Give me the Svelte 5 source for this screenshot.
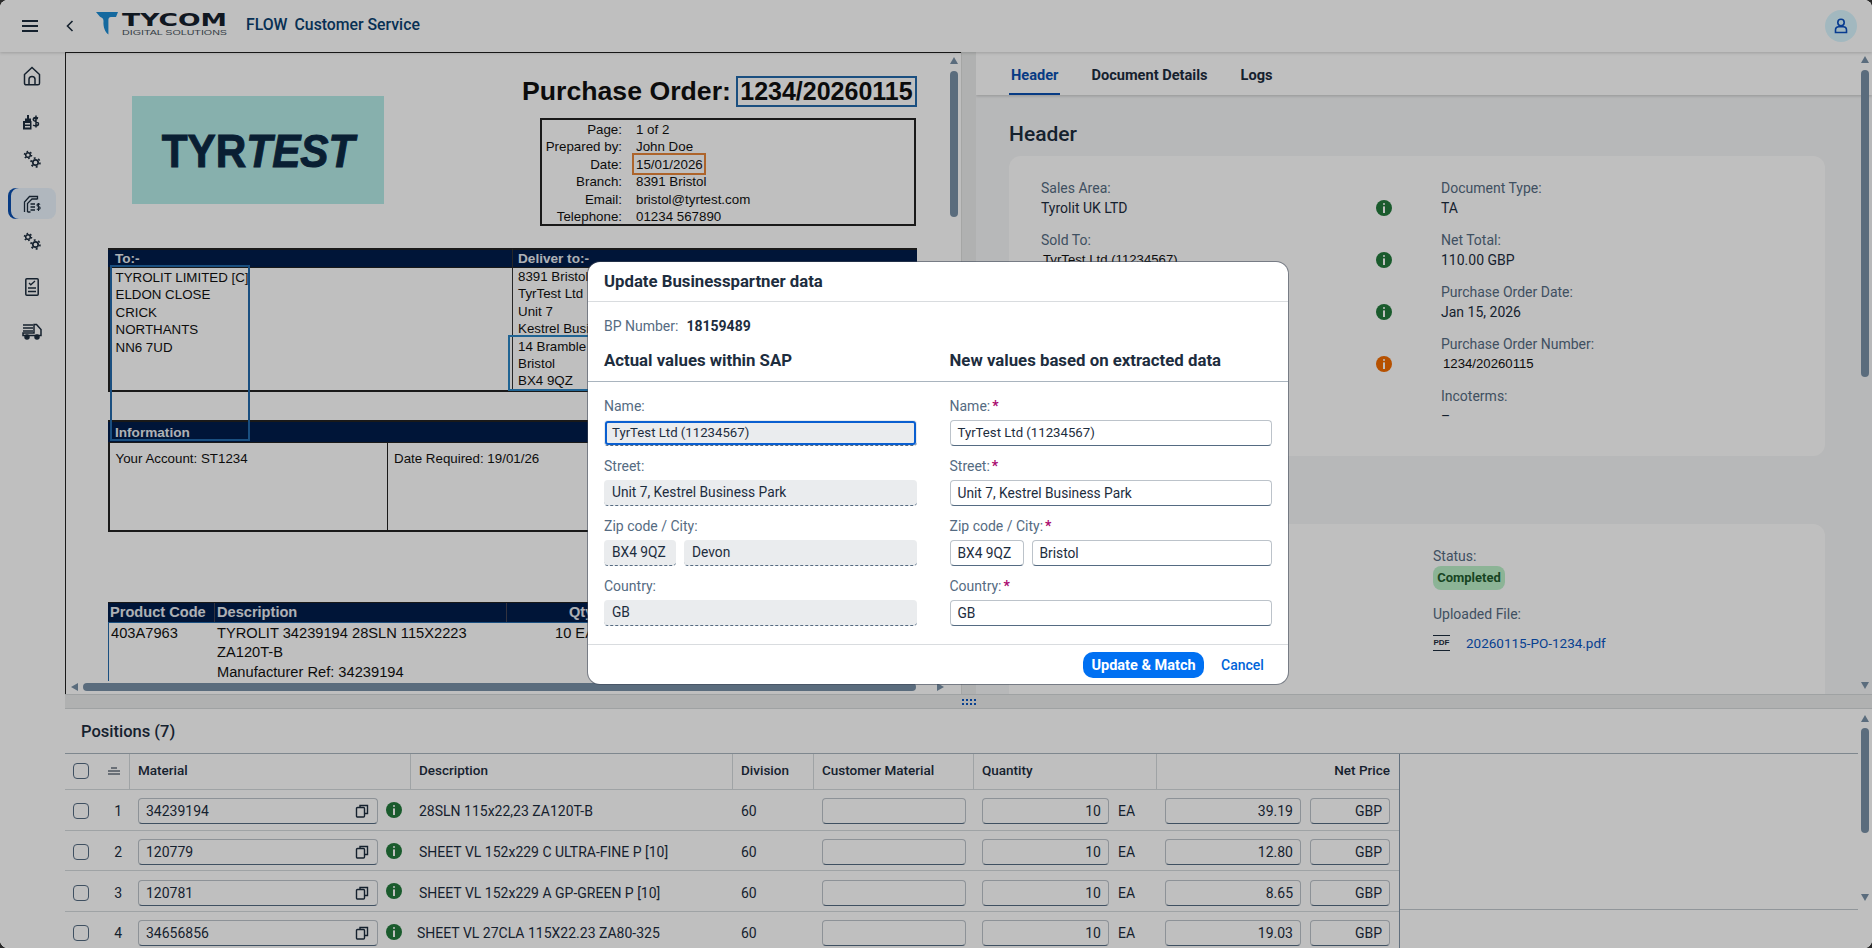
<script>
    const rows = [
        { no: 1, material: '34239194', desc: '28SLN 115x22,23 ZA120T-B', price: '39.19' },
        { no: 2, material: '120779', desc: 'SHEET VL 152x229 C ULTRA-FINE P [10]', price: '12.80' },
        { no: 3, material: '120781', desc: 'SHEET VL 152x229 A GP-GREEN P [10]', price: '8.65' },
        { no: 4, material: '34656856', desc: 'SHEET VL 27CLA 115X22.23 ZA80-325', price: '19.03' }
    ];

    const infoLines = [
        ['Page:', '1 of 2'],
        ['Prepared by:', 'John Doe'],
        ['Date:', '15/01/2026'],
        ['Branch:', '8391 Bristol'],
        ['Email:', 'bristol@tyrtest.com'],
        ['Telephone:', '01234 567890']
    ];

    const headerFields = [
        { left: 'Sales Area:', leftValue: 'Tyrolit UK LTD', right: 'Document Type:', rightValue: 'TA', tone: 'green' },
        { left: 'Sold To:', leftValue: 'TyrTest Ltd (11234567)', right: 'Net Total:', rightValue: '110.00 GBP', tone: 'green' },
        { left: '', leftValue: '', right: 'Purchase Order Date:', rightValue: 'Jan 15, 2026', tone: 'green' },
        { left: '', leftValue: '', right: 'Purchase Order Number:', rightValue: '1234/20260115', tone: 'orange' },
        { left: '', leftValue: '', right: 'Incoterms:', rightValue: '–', tone: '' }
    ];
</script>

{#snippet info(tone)}
    <svg class="info {tone}" viewBox="0 0 16 16" width="16" height="16">
        <circle cx="8" cy="8" r="8" fill="currentColor" />
        <rect x="7" y="3" width="2" height="2" rx="1" fill="#fff" />
        <rect x="7" y="6.4" width="2" height="6.6" fill="#fff" />
    </svg>
{/snippet}

{#snippet gears()}
    <svg viewBox="0 0 20 20" width="20" height="20" fill="none" stroke="#1d2d3e">
        <circle cx="6" cy="6" r="2.3" stroke-width="1.5" />
        <circle cx="6" cy="6" r="3.6" stroke-width="1.4" stroke-dasharray="1.6 2.17" />
        <circle cx="13.5" cy="13.5" r="2.7" stroke-width="1.7" />
        <circle cx="13.5" cy="13.5" r="4.5" stroke-width="1.6" stroke-dasharray="2 2.71" />
    </svg>
{/snippet}

<div class="root">
    <header class="shell">
        <svg class="burger" viewBox="0 0 16 12" width="16" height="12" fill="#1d2d3e">
            <rect width="16" height="2" /><rect y="5" width="16" height="2" /><rect y="10" width="16" height="2" />
        </svg>
        <svg class="back" viewBox="0 0 8 12" width="8" height="12" fill="none" stroke="#1d2d3e" stroke-width="1.6">
            <path d="M6.5 1 1.5 6l5 5" />
        </svg>
        <svg class="logo" viewBox="0 0 132 26" width="132" height="26">
            <path d="M0 1h22l-2 5h-5c-2 0-2.6 1.5-2.6 3v14.5C9 21 7 16 7.5 10 7.700 8 6 6.500 4 5.800Z" fill="#1c8cd4" />
            <text x="26" y="15.300" font-family="'DejaVu Sans', sans-serif" font-weight="700" font-size="18" textLength="105" lengthAdjust="spacingAndGlyphs" fill="#16202c">TYCOM</text>
            <text x="26" y="23.500" font-family="'Liberation Sans', sans-serif" font-size="7.500" textLength="105" lengthAdjust="spacingAndGlyphs" fill="#4a5560">DIGITAL SOLUTIONS</text>
        </svg>
        <div class="app-title"><span>FLOW</span><span>Customer Service</span></div>
        <div class="avatar">
            <svg viewBox="0 0 16 16" width="16" height="16" fill="none" stroke="#0a4fc0" stroke-width="1.6">
                <circle cx="8" cy="4.500" r="3.200" />
                <path d="M2.500 14.500V12c0-2 1.500-3.300 3.300-3.300h4.400c1.800 0 3.300 1.300 3.300 3.300v2.500Z" />
            </svg>
        </div>
    </header>

    <div class="main">
        <nav class="side">
            <div class="nav-item home">
                <svg viewBox="0 0 18 20" width="18" height="20" fill="none" stroke="#1d2d3e" stroke-width="1.500">
                    <path d="M1.500 8.500 9 1.500l7.500 7v8.700c0 1-.8 1.600-1.600 1.600H3.100c-.8 0-1.600-.6-1.600-1.600Z" />
                    <path d="M6 18.500v-5.200c0-1.700 1.300-2.800 3-2.800s3 1.100 3 2.800v5.200" />
                </svg>
            </div>
            <div class="nav-item funds">
                <svg viewBox="0 0 20 18" width="20" height="18" fill="#1d2d3e">
                    <path d="M1 16.500V8h2V5.500h2V2h2v3.500h2V8h.5v8.500ZM3 10v1.500h5V10Zm0 3v1.500h5V13Z" fill-rule="evenodd" />
                    <path d="M11 5.500h5M16 5c-1-.9-4.800-1-4.800 1.400 0 2.600 5.300 1.600 5.300 4.300 0 2.500-4 2.400-5.400 1.300M14 2.500v12" fill="none" stroke="#1d2d3e" stroke-width="1.500" />
                </svg>
            </div>
            <div class="nav-item gears-a">{@render gears()}</div>
            <div class="nav-item active">
                <svg viewBox="0 0 18 18" width="18" height="18" fill="none" stroke="#1d2d3e" stroke-width="1.300">
                    <path d="M1.500 17V7L6.500 1.500h8V4.500" />
                    <path d="M4.500 17V8.500L9 4h5" />
                    <path d="M7.500 9h4.500M7.500 12h4.500M7.500 15h4.500M4.500 17h3" stroke-width="1.400" />
                    <path d="M17 9.500c-.6-.9-3-.9-3 .7 0 1.800 3.200 1 3.200 2.900 0 1.700-2.600 1.600-3.400.8M15.500 8v8" stroke-width="1.100" />
                </svg>
            </div>
            <div class="nav-item gears-b">{@render gears()}</div>
            <div class="nav-item check">
                <svg viewBox="0 0 14 18" width="14" height="18" fill="none" stroke="#1d2d3e" stroke-width="1.500">
                    <rect x=".8" y=".8" width="12.400" height="16.400" rx="1" />
                    <path d="m4 5 1.800 1.800L10 3" stroke-width="1.300" />
                    <path d="M3 10h8M3 13.500h8" />
                </svg>
            </div>
            <div class="nav-item truck">
                <svg viewBox="0 0 20 18" width="20" height="18" fill="none" stroke="#1d2d3e" stroke-width="1.500">
                    <path d="M1 2h10M1 5h10M1 8h10" />
                    <path d="M12 1.500h2.500l4.500 5v6H1v-2.500h11Z" />
                    <circle cx="5" cy="14" r="2" fill="#1d2d3e" />
                    <circle cx="15" cy="14" r="2" fill="#1d2d3e" />
                </svg>
            </div>
        </nav>

        <div class="content">
            <div class="upper">
                <section class="doc-pane">
                    <div class="doc-view">
                        <div class="page">
                            <div class="top">
                                <div class="brand"><div class="brand-text"><span>TYR</span><em>TEST</em></div></div>
                                <div class="top-right">
                                    <div class="title"><span>Purchase Order:</span><span class="po-no">1234/20260115</span></div>
                                    <div class="info-box">
                                        {#each infoLines as line}
                                            <div class="info-line">
                                                <span class="k">{line[0]}</span>
                                                <span class="v" class:hl={line[0] === 'Date:'}>{line[1]}</span>
                                            </div>
                                        {/each}
                                    </div>
                                </div>
                            </div>

                            <div class="addr">
                                <div class="bar">To:-</div>
                                <div class="bar">Deliver to:-</div>
                                <div class="cell lines">TYROLIT LIMITED [C]<br />ELDON CLOSE<br />CRICK<br />NORTHANTS<br />NN6 7UD</div>
                                <div class="cell">8391 Bristol<br />TyrTest Ltd<br />Unit 7<br />Kestrel Business Park<br />14 Bramble Way<br />Bristol<br />BX4 9QZ</div>
                            </div>

                            <div class="inform">
                                <div class="bar wide">Information</div>
                                <div class="cell">Your Account: ST1234</div>
                                <div class="cell">Date Required: 19/01/26</div>
                            </div>

                            <div class="products">
                                <div class="p-head">
                                    <span class="pc">Product Code</span>
                                    <span class="pd">Description</span>
                                    <span class="pq">Qty</span>
                                </div>
                                <div class="p-row">
                                    <span class="pc">403A7963</span>
                                    <span class="pd">TYROLIT 34239194 28SLN 115X2223<br />ZA120T-B<br /><span class="ref">Manufacturer Ref: 34239194</span></span>
                                    <span class="pq">10 EA</span>
                                </div>
                            </div>

                            <div class="mark mark-to"></div>
                            <div class="mark mark-ship"></div>
                        </div>
                    </div>
                    <div class="hscroll">
                        <i class="arrow left"></i>
                        <div class="hthumb"></div>
                        <i class="arrow right"></i>
                    </div>
                    <div class="vscroll doc-v">
                        <i class="arrow up"></i>
                        <div class="vthumb"></div>
                    </div>
                </section>

                <div class="vsplit"></div>

                <section class="detail">
                    <div class="tabs">
                        <span class="tab on">Header</span>
                        <span class="tab">Document Details</span>
                        <span class="tab">Logs</span>
                    </div>
                    <div class="detail-body">
                        <h2>Header</h2>
                        <div class="card one">
                            {#each headerFields as f}
                                <div class="f-row">
                                    <div class="f-left">
                                        {#if f.left}<div class="lbl">{f.left}</div><div class="val" class:mono={f.left === 'Sold To:'}>{f.leftValue}</div>{/if}
                                    </div>
                                    <div class="f-icon">{#if f.tone}{@render info(f.tone)}{/if}</div>
                                    <div class="f-right">
                                        <div class="lbl">{f.right}</div>
                                        <div class="val" class:mono={f.tone === 'orange'}>{f.rightValue}</div>
                                    </div>
                                </div>
                            {/each}
                        </div>
                        <div class="card two">
                            <div class="lbl">Status:</div>
                            <div class="badge">Completed</div>
                            <div class="lbl up">Uploaded File:</div>
                            <div class="file">
                                <span class="pdf">PDF</span>
                                <span class="link">20260115-PO-1234.pdf</span>
                            </div>
                        </div>
                    </div>
                    <div class="vscroll detail-v">
                        <i class="arrow up"></i>
                        <div class="vthumb"></div>
                        <i class="arrow down"></i>
                    </div>
                </section>
            </div>

            <div class="hsplit"><div class="grip"></div></div>

            <section class="positions">
                <div class="pos-title">Positions (7)</div>
                <div class="table-wrap">
                    <div class="grid">
                        <div class="g-head">
                            <div class="c-sel"><span class="box"></span>
                                <svg viewBox="0 0 14 8" width="14" height="8" stroke="#1d2d3e" fill="none"><path d="M4 1h6M1 4h12M1 7h12" /></svg>
                            </div>
                            <div class="c-mat">Material</div>
                            <div class="c-desc">Description</div>
                            <div class="c-div">Division</div>
                            <div class="c-cust">Customer Material</div>
                            <div class="c-qty">Quantity</div>
                            <div class="c-price end">Net Price</div>
                        </div>
                        {#each rows as r}
                            <div class="g-row">
                                <div class="c-sel"><span class="box"></span><span class="no">{r.no}</span></div>
                                <div class="c-mat">
                                    <div class="inp mat">{r.material}
                                        <svg viewBox="0 0 14 14" width="14" height="14" fill="none" stroke="#1d2d3e" stroke-width="1.400">
                                            <path d="M5 3.500V1.500h7.500v8H9.500" />
                                            <rect x="1.500" y="3.500" width="8" height="9.500" rx="1" />
                                        </svg>
                                    </div>
                                    {@render info('green')}
                                </div>
                                <div class="c-desc" class:nudge={r.no === 4}>{r.desc}</div>
                                <div class="c-div">60</div>
                                <div class="c-cust"><div class="inp"></div></div>
                                <div class="c-qty"><div class="inp num">10</div><span>EA</span></div>
                                <div class="c-price"><div class="inp num p">{r.price}</div><div class="inp num cur">GBP</div></div>
                            </div>
                        {/each}
                    </div>
                    <div class="filler"></div>
                </div>
                <div class="vscroll pos-v">
                    <i class="arrow up"></i>
                    <div class="vthumb"></div>
                    <i class="arrow down"></i>
                </div>
            </section>
        </div>
    </div>

    <div class="overlay"></div>

    <div class="modal">
        <div class="m-head">Update Businesspartner data</div>
        <div class="m-intro">
            <div class="bp"><span>BP Number:</span><b>18159489</b></div>
            <div class="m-cols heads"><b>Actual values within SAP</b><b>New values based on extracted data</b></div>
        </div>
        <div class="m-cols form">
            <div>
                <div class="fld"><label>Name:</label><div class="ro focus tight">TyrTest Ltd (11234567)</div></div>
                <div class="fld"><label>Street:</label><div class="ro">Unit 7, Kestrel Business Park</div></div>
                <div class="fld"><label>Zip code / City:</label><div class="pair"><div class="ro zip">BX4 9QZ</div><div class="ro city">Devon</div></div></div>
                <div class="fld"><label>Country:</label><div class="ro">GB</div></div>
            </div>
            <div>
                <div class="fld"><label>Name:<i>*</i></label><div class="ed tight">TyrTest Ltd (11234567)</div></div>
                <div class="fld"><label>Street:<i>*</i></label><div class="ed">Unit 7, Kestrel Business Park</div></div>
                <div class="fld"><label>Zip code / City:<i>*</i></label><div class="pair"><div class="ed zip">BX4 9QZ</div><div class="ed city">Bristol</div></div></div>
                <div class="fld"><label>Country:<i>*</i></label><div class="ed">GB</div></div>
            </div>
        </div>
        <div class="m-foot">
            <button class="primary">Update &amp; Match</button>
            <button class="plain">Cancel</button>
        </div>
    </div>
</div>

<style>
    :global(body) {
        margin: 0;
        background: #2b2b2b;
        overflow: hidden;
    }
    .root {
        position: relative;
        width: 1872px;
        height: 948px;
        overflow: hidden;
        border-radius: 8px;
        background: #fff;
        color: #1d2d3e;
        font-family: Roboto, "Liberation Sans", sans-serif;
        font-size: 14px;
    }

    /* shell bar */
    .shell {
        position: relative;
        z-index: 1;
        height: 52px;
        display: flex;
        align-items: center;
        background: #fff;
        box-shadow: 0 1px 3px rgba(0, 0, 0, .18);
    }
    .burger { margin-left: 22px; }
    .back { margin-left: 28px; }
    .logo { margin: -4px 0 0 22px; }
    .app-title {
        display: flex;
        gap: 7px;
        margin: -4px 0 0 18px;
        color: #0a4170;
        font-size: 15.800px;
        font-weight: 500;
    }
    .avatar {
        width: 32px;
        height: 32px;
        margin: 0 15px 0 auto;
        border-radius: 50%;
        background: #d9f6ff;
        display: flex;
        align-items: center;
        justify-content: center;
    }

    .main {
        display: flex;
        height: 896px;
    }
    .side {
        width: 65px;
        flex: none;
        background: #fff;
        position: relative;
    }
    .nav-item {
        position: absolute;
        left: 8px;
        width: 48px;
        height: 31px;
        display: flex;
        align-items: center;
        justify-content: center;
    }
    .home { top: 8px; }
    .funds { top: 54px; }
    .gears-a { top: 91px; }
    .active {
        top: 136px;
        background: #ebf5fe;
        border-radius: 8px;
        box-shadow: inset 3px 0 0 #0a4fb0;
    }
    .gears-b { top: 173px; }
    .check { top: 219px; }
    .truck { top: 264px; }

    .content {
        flex: 1;
        min-width: 0;
    }
    .upper {
        display: flex;
        height: 642px;
    }

    /* pdf preview */
    .doc-pane {
        position: relative;
        width: 896px;
        flex: none;
        box-sizing: border-box;
        border-top: 1px solid #222;
        border-left: 1px solid #222;
        background: #fff;
    }
    .doc-view {
        height: 628px;
        overflow: hidden;
    }
    .page {
        position: relative;
        width: 809px;
        margin-left: 42px;
        color: #111;
        font-family: "Liberation Sans", Arial, sans-serif;
        font-size: 13.33px;
        line-height: 17.400px;
    }
    .top {
        display: flex;
        justify-content: space-between;
        height: 195px;
    }
    .brand {
        width: 252px;
        height: 108px;
        margin: 43px 0 0 24px;
        background: #b5ebe7;
        color: #0c2a45;
        display: flex;
        align-items: center;
        justify-content: center;
        font-size: 47px;
        font-weight: 700;
    }
    .brand-text {
        transform: scaleX(.9);
        padding-top: 2px;
        white-space: nowrap;
        -webkit-text-stroke: 1px #0c2a45;
    }
    .top-right {
        width: 380px;
        padding-top: 23px;
    }
    .title {
        font-size: 26.670px;
        font-weight: 700;
        line-height: 31px;
        white-space: nowrap;
        margin-left: -15px;
        display: flex;
        align-items: center;
        gap: 5px;
    }
    .po-no {
        box-sizing: border-box;
        width: 182px;
        height: 31px;
        border: 2px solid #236aab;
        text-align: center;
        line-height: 27px;
        font-size: 25px;
    }
    .info-box {
        box-sizing: border-box;
        width: 376px;
        height: 108px;
        margin: 11px 0 0 3px;
        border: 2px solid #222;
        padding-top: .5px;
    }
    .info-line {
        display: flex;
        gap: 14px;
        height: 17.500px;
    }
    .k { width: 80px; text-align: right; }
    .v { position: relative; }
    .hl::after {
        content: "";
        position: absolute;
        left: -4px;
        top: -2.500px;
        width: 74px;
        height: 22px;
        box-sizing: border-box;
        border: 2px solid #e7863a;
    }
    .bar {
        background: #011c4b;
        color: #e8ecf2;
        font-weight: 700;
        font-size: 13.600px;
        padding-left: 7px;
        height: 20px;
        line-height: 18px;
        box-sizing: border-box;
        border-top: 2px solid #222;
        border-bottom: 1px solid #222;
    }
    .addr {
        display: grid;
        grid-template-columns: 404px 405px;
        grid-template-rows: 20px 124px;
    }
    .addr .bar + .bar { border-left: 1px solid #333; padding-left: 5px; }
    .cell {
        box-sizing: border-box;
        border-left: 2px solid #222;
        border-bottom: 2px solid #222;
        padding: 0 0 0 5.500px;
    }
    .lines { padding-top: 1px; }
    .addr .cell + .cell { border-left: 1px solid #333; padding-left: 5px; }
    .inform {
        display: grid;
        grid-template-columns: 280px 529px;
        grid-template-rows: 23px 89px;
        margin-top: 28px;
    }
    .wide {
        grid-column: 1 / 3;
        height: 23px;
        line-height: 21px;
    }
    .inform .cell { padding-top: 7px; border-right: 1px solid #222; }
    .inform .cell + .cell { border-left: none; padding-left: 6px; border-right: 2px solid #222; }
    .products { margin-top: 70px; }
    .p-head {
        display: flex;
        height: 21px;
        background: #011c4b;
        color: #e8ecf2;
        font-size: 14.600px;
        font-weight: 700;
        line-height: 19px;
        border-top: 1px solid #222;
        border-bottom: 1px solid #236aab;
        box-sizing: border-box;
    }
    .p-row {
        display: flex;
        padding-top: 1px;
        font-size: 14.670px;
        line-height: 18.500px;
        border-left: 1px solid #236aab;
    }
    .pc { width: 106px; padding-left: 2px; flex: none; box-sizing: border-box; }
    .pd { width: 293px; padding-left: 2px; flex: none; box-sizing: border-box; }
    .p-head .pd { border-left: 1px solid #445; border-right: 1px solid #445; }
    .pq { flex: 1; padding-left: 47px; }
    .p-head .pq { padding-left: 62px; }
    .ref { display: inline-block; margin-top: 2px; }
    .mark {
        position: absolute;
        box-sizing: border-box;
        border: 2px solid #236aab;
    }
    .mark-to { left: 2px; top: 212px; width: 140px; height: 176px; }
    .mark-ship { left: 400px; top: 282px; width: 300px; height: 56px; border-color: #2b86c5; }

    .hscroll {
        height: 12px;
        display: flex;
        align-items: center;
        position: relative;
        margin-left: 3px;
    }
    .hthumb {
        position: absolute;
        left: 14px;
        width: 833px;
        height: 8px;
        border-radius: 4px;
        background: #7991a7;
    }
    .vscroll {
        position: absolute;
        width: 8px;
    }
    .vthumb {
        position: absolute;
        width: 8px;
        border-radius: 4px;
        background: #7991a7;
    }
    .arrow {
        position: absolute;
        width: 0;
        height: 0;
        border: 4px solid transparent;
    }
    .arrow.up { border-bottom: 7px solid #7991a7; border-top: 0; left: 0; top: 0; }
    .arrow.down { border-top: 7px solid #7991a7; border-bottom: 0; left: 0; }
    .arrow.left { border-right: 7px solid #7991a7; border-left: 0; left: 2px; }
    .arrow.right { border-left: 7px solid #7991a7; border-right: 0; left: 868px; }
    .doc-v { right: 3px; top: 4px; height: 170px; }
    .doc-v .vthumb { top: 14px; height: 146px; }

    .vsplit {
        width: 15px;
        flex: none;
        background: #ebedec;
        border-left: 1px solid #dcdedd;
        box-sizing: border-box;
    }

    /* detail pane */
    .detail {
        position: relative;
        flex: 1;
        min-width: 0;
        background: #f5f6f7;
        overflow: hidden;
    }
    .tabs {
        height: 43px;
        background: #fff;
        display: flex;
        padding-left: 33px;
        box-shadow: 0 1px 3px rgba(0, 0, 0, .2);
        position: relative;
        font-weight: 700;
        font-size: 14.600px;
        gap: 29px;
    }
    .tab {
        height: 41px;
        line-height: 46px;
        padding: 0 2px;
    }
    .tab.on {
        color: #0a4fb0;
        box-shadow: 0 2px 0 #0a4fb0;
    }
    .detail-body {
        padding: 0 47px 0 33px;
        margin-right: 16px;
    }
    h2 {
        margin: 0;
        padding-top: 25px;
        height: 36px;
        font-size: 21px;
        line-height: 28px;
        font-weight: 500;
    }
    .card {
        background: #fff;
        border-radius: 12px;
        width: 816px;
        box-sizing: border-box;
    }
    .card.one {
        height: 300px;
        padding: 22px 0 0 32px;
    }
    .card.two {
        height: 200px;
        margin-top: 68px;
        padding: 22px 0 0 424px;
    }
    .f-row {
        display: flex;
        height: 52px;
    }
    .f-left { width: 335px; }
    .f-icon { width: 65px; padding-top: 22px; line-height: 0; }
    .lbl {
        color: #556b82;
        font-size: 14px;
        line-height: 20px;
    }
    .val {
        font-size: 14px;
        line-height: 20px;
    }
    .val.mono {
        font-family: "Liberation Sans", sans-serif;
        font-size: 13.200px;
        padding-left: 2px;
        color: #111;
    }
    .badge {
        display: inline-block;
        width: 72px;
        height: 24px;
        border-radius: 8px;
        background: #bbf0c9;
        color: #1f5c2e;
        font-size: 13px;
        font-weight: 700;
        text-align: center;
        line-height: 24px;
    }
    .lbl.up { margin-top: 14px; }
    .file {
        display: flex;
        align-items: center;
        margin-top: 9px;
        height: 20px;
    }
    .pdf {
        width: 17px;
        height: 16px;
        font-size: 8px;
        font-weight: 700;
        text-align: center;
        line-height: 13px;
        border-top: 1.500px solid #1d2d3e;
        border-bottom: 1.500px solid #1d2d3e;
        box-sizing: border-box;
        font-family: "Liberation Sans", sans-serif;
    }
    .link {
        color: #0a56c2;
        font-size: 13.500px;
        margin-left: 16px;
    }
    .detail-v { right: 3px; top: 4px; height: 640px; }
    .detail-v .vthumb { top: 14px; height: 307px; }
    .detail-v .down { top: 626px; }

    .hsplit {
        height: 15px;
        background: #ebedec;
        box-sizing: border-box;
        border-top: 1px solid #d5d8da;
        border-bottom: 1px solid #d5d8da;
        display: flex;
        align-items: center;
        padding-left: 896px;
    }
    .grip {
        width: 16px;
        height: 7px;
        background-image: radial-gradient(#0a56c2 1.100px, transparent 1.300px);
        background-size: 4px 4px;
    }

    /* positions table */
    .positions {
        position: relative;
        height: 239px;
        background: #fff;
        overflow: hidden;
    }
    .pos-title {
        height: 45px;
        line-height: 45px;
        padding-left: 16px;
        font-size: 16.500px;
        font-weight: 500;
        box-sizing: border-box;
        border-bottom: 1px solid #a9b4be;
        margin-right: 14px;
    }
    .table-wrap {
        display: flex;
        margin-right: 14px;
    }
    .grid {
        width: 1334px;
        flex: none;
        border-right: 1px solid #8396a8;
    }
    .filler {
        flex: 1;
        height: 155px;
        border-bottom: 1px solid #c2c8ce;
    }
    .g-head, .g-row {
        display: grid;
        grid-template-columns: 65px 281px 322px 81px 160px 183px 242px;
        align-items: center;
        box-sizing: border-box;
        border-bottom: 1px solid #d5dadd;
    }
    .g-head {
        height: 36px;
        font-weight: 500;
        font-size: 13.500px;
    }
    .g-head > div {
        height: 100%;
        display: flex;
        align-items: center;
        padding: 0 0 4px 8px;
        box-sizing: border-box;
        border-right: 1px solid #d5dadd;
    }
    .g-head .c-sel { gap: 18px; padding-bottom: 2px; }
    .g-head .c-price { border-right: none; }
    .g-head .end { justify-content: flex-end; padding-right: 9px; }
    .g-row { height: 40.700px; font-size: 14px; padding-top: 3px; }
    .g-row > div {
        display: flex;
        align-items: center;
        padding-left: 8px;
        box-sizing: border-box;
        white-space: nowrap;
    }
    .g-row > .nudge { padding-left: 6px; }
    .box {
        width: 16px;
        height: 16px;
        flex: none;
        box-sizing: border-box;
        border: 1px solid #556b82;
        border-radius: 4px;
        background: #fff;
    }
    .no { width: 33px; text-align: right; }
    .inp {
        position: relative;
        box-sizing: border-box;
        height: 26px;
        border: 1px solid #bcc3ca;
        border-bottom-color: #556b82;
        border-radius: 4px;
        background: #fff;
        line-height: 24px;
        padding: 0 7px;
        flex: none;
    }
    .mat { width: 240px; }
    .mat svg { position: absolute; right: 8px; top: 5px; }
    .c-mat :global(.info) { margin: -3px 0 0 8px; }
    .c-cust .inp { width: 144px; }
    .num { text-align: right; }
    .c-qty .inp { width: 127px; }
    .c-qty span { margin-left: 9px; }
    .p { width: 136px; }
    .cur { width: 80px; margin-left: 9px; }
    .info.green { color: #237a3c; flex: none; }
    .info.orange { color: #f36c00; }
    .pos-v { right: 3px; top: 6px; height: 190px; }
    .pos-v .vthumb { top: 13px; height: 105px; }
    .pos-v .down { top: 179px; }

    .overlay {
        position: absolute;
        z-index: 2;
        inset: 0;
        background: rgba(0, 0, 0, .25);
    }

    /* dialog */
    .modal {
        position: absolute;
        z-index: 3;
        left: 588px;
        top: 262px;
        width: 700px;
        height: 422px;
        display: flex;
        flex-direction: column;
        background: #fff;
        border-radius: 12px;
        box-shadow: 0 0 0 1px rgba(60, 70, 85, .55);
    }
    .m-head {
        height: 40px;
        flex: none;
        box-sizing: border-box;
        padding-left: 16px;
        line-height: 39px;
        border-bottom: 1px solid #d9dcdf;
        font-size: 16.750px;
        font-weight: 700;
    }
    .m-intro {
        height: 80px;
        flex: none;
        box-sizing: border-box;
        border-bottom: 1px solid #a9b4be;
        padding-top: 14px;
    }
    .bp {
        display: flex;
        gap: 8px;
        padding-left: 16px;
        height: 20px;
        line-height: 20px;
    }
    .bp span { color: #556b82; }
    .bp b { font-weight: 700; }
    .m-cols {
        display: grid;
        grid-template-columns: 313px 322px;
        gap: 32.500px;
        padding-left: 16px;
    }
    .heads {
        margin-top: 14px;
        font-size: 16.800px;
        line-height: 20px;
    }
    .heads b { font-weight: 700; }
    .form {
        padding-top: 14px;
        flex: 1;
    }
    .fld { height: 60px; }
    label {
        display: block;
        height: 20px;
        margin-bottom: 4px;
        line-height: 20px;
        color: #556b82;
        font-size: 14px;
    }
    label i {
        color: #aa0a6f;
        font-style: normal;
        font-weight: 700;
        margin-left: 2px;
    }
    .ro, .ed {
        box-sizing: border-box;
        height: 26px;
        border-radius: 4px;
        line-height: 25px;
        padding-left: 8px;
        font-size: 13.750px;
    }
    .ro {
        background: #eaecee;
        border-bottom: 1px dashed #556b82;
    }
    .ed {
        background: #fff;
        border: 1px solid #bcc3ca;
        border-bottom-color: #556b82;
        line-height: 24px;
        padding-left: 7px;
    }
    .tight { font-size: 13.200px; }
    .focus {
        outline: 2px solid #0a5fd0;
        outline-offset: -3px;
    }
    .pair {
        display: flex;
        gap: 8px;
    }
    .zip { width: 72px; flex: none; }
    .ed.zip { width: 74px; }
    .city { flex: 1; }
    .m-foot {
        height: 40px;
        flex: none;
        box-sizing: border-box;
        border-top: 1px solid #d9dcdf;
        display: flex;
        align-items: center;
        justify-content: flex-end;
        padding: 1px 18px 0 0;
        gap: 11px;
    }
    button {
        height: 26px;
        border: none;
        border-radius: 8px;
        padding: 0;
        font: inherit;
        font-size: 14.500px;
        font-weight: 700;
    }
    .primary {
        width: 121px;
        background: #0070f2;
        color: #fff;
        border-radius: 10px;
    }
    .plain {
        width: 55px;
        background: none;
        color: #0064d9;
        font-size: 14px;
        font-weight: 500;
    }
</style>
